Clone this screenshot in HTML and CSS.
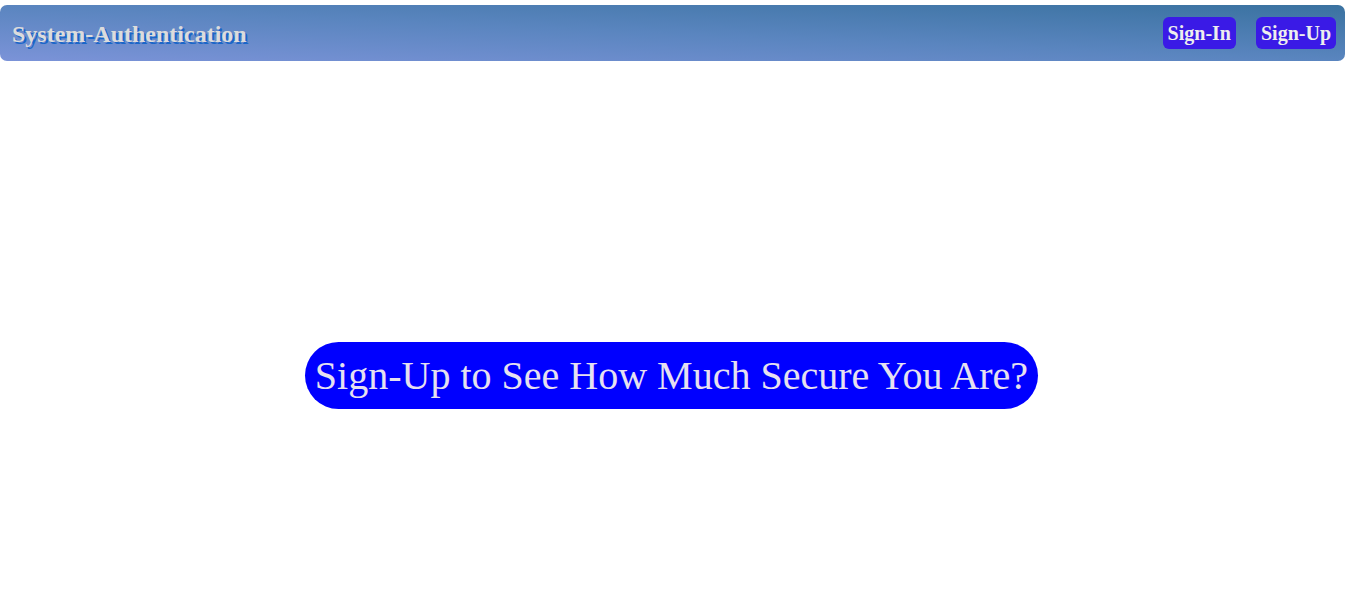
FILE: index.html
```html
<!DOCTYPE html>
<html>
<head>
<meta charset="utf-8">
<link rel="stylesheet" href="styles.css">
</head>
<body>
<nav class="navbar">
  <div class="brand">System-Authentication</div>
  <div class="nav-links">
    <a class="nav-btn" href="#">Sign-In</a>
    <a class="nav-btn" href="#">Sign-Up</a>
  </div>
</nav>
<main class="hero">
  <div class="hero-pill">Sign-Up to See How Much Secure You Are?</div>
</main>
</body>
</html>
```
FILE: styles.css
```css
html, body {
  margin: 0;
  padding: 0;
  background: #fff;
  font-family: "Liberation Serif", "Times New Roman", serif;
}
body {
  padding-top: 5px;
}
.navbar {
  height: 56px;
  box-sizing: border-box;
  display: flex;
  align-items: center;
  justify-content: space-between;
  padding: 0 9px 0 12px;
  border-radius: 7px;
  background: linear-gradient(to top right, #7b93d8 0%, #5a85bf 50%, #3a72a0 100%);
}
.brand {
  font-size: 24px;
  font-weight: bold;
  color: #dcdcdc;
  text-shadow: 2px 2px 0 #1a66c8;
  padding-top: 2px;
}
.nav-links {
  display: flex;
  gap: 20px;
}
.nav-btn {
  display: block;
  background: #3a1ae6;
  color: #eee;
  text-decoration: none;
  font-weight: bold;
  font-size: 20px;
  line-height: 32px;
  padding: 0 5px;
  border-radius: 6px;
}
.hero {
  display: flex;
  justify-content: center;
  padding-top: 281px;
  padding-right: 2px;
}
.hero-pill {
  background: #0000ff;
  color: #e6e0f0;
  font-size: 40px;
  line-height: 67px;
  padding: 0 10px;
  border-radius: 34px;
}
```
